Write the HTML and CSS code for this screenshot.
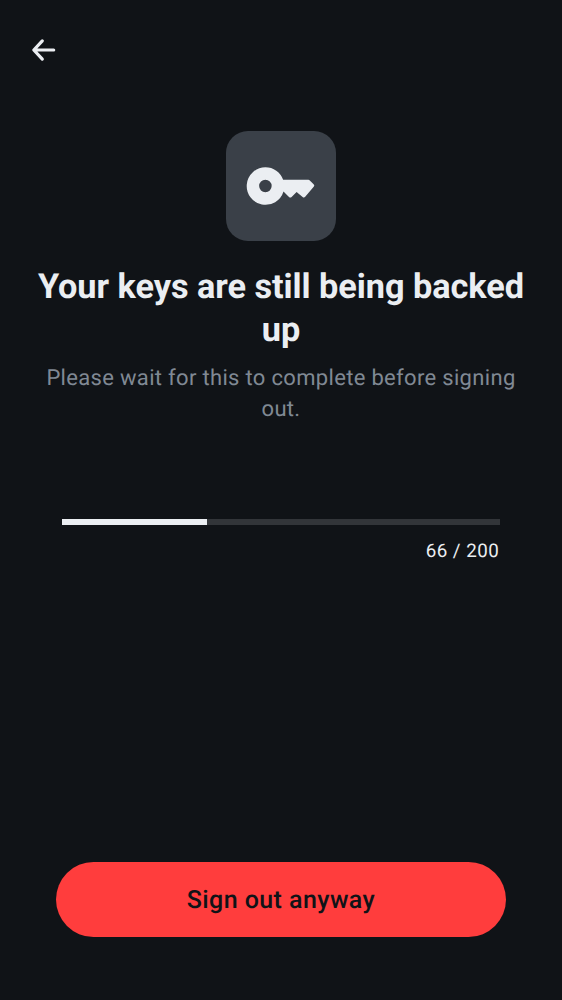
FILE: index.html
```html
<!DOCTYPE html>
<html lang="en">
<head>
<meta charset="utf-8">
<title>Sign out</title>
<link rel="stylesheet" href="styles.css">
</head>
<body>
<div class="screen">
  <header class="topbar">
    <button class="back" aria-label="Back">
      <svg viewBox="0 0 38 38" fill="none" stroke="currentColor" stroke-width="3.2" stroke-linecap="round" stroke-linejoin="round"><path d="M28.700 19H9.500M17.300 9.900L8.800 19l8.500 9.100"/></svg>
    </button>
  </header>
  <main class="content">
    <div class="tile">
      <svg viewBox="0.6 -0.6 75 75"><path fill="currentColor" fill-rule="evenodd" d="M22 18.600a18.800 18.800 0 0 1 17.750 12.600H65q.8 0 1.400.6l3.800 3.800q1.300 1.300.1 2.600L61.800 48.200q-1.200 1.300-2.600.1L53.200 43.400 48.200 48.300q-1.300 1.200-2.600 0L40.100 42.900A18.800 18.800 0 1 1 22 18.600zM22 31.150a6.250 6.250 0 1 0 0 12.500a6.250 6.250 0 1 0 0-12.500z"/></svg>
    </div>
    <h1 class="title">Your keys are still being backed up</h1>
    <p class="subtitle">Please wait for this to complete before signing out.</p>
    <div class="progress">
      <div class="track"><div class="fill"></div></div>
      <span class="count">66 / 200</span>
    </div>
  </main>
  <footer class="footer"><button class="danger">Sign out anyway</button></footer>
</div>
</body>
</html>
```
FILE: styles.css
```css
* { box-sizing: border-box; }
body { margin: 0; background: #101317; color: #ebeef2; font-family: Roboto, sans-serif; text-rendering: geometricPrecision; }
button { border: 0; font: inherit; text-rendering: inherit; }
.screen { height: 1000px; display: flex; flex-direction: column; }
.topbar { height: 131px; padding: 31px 0 0 25px; }
.back { display: block; padding: 0; background: none; color: #ebeef2; width: 38px; height: 38px; }
.back svg { display: block; width: 38px; height: 38px; }
.content { flex: 1; display: flex; flex-direction: column; align-items: center; padding: 0 31px; }
.tile { width: 109.5px; height: 109.5px; border-radius: 22px; background: #3a4048; display: flex; align-items: center; justify-content: center; }
.tile svg { width: 75px; height: 75px; }
.title { margin: 25.5px 0 0; font-size: 34.3px; line-height: 43px; letter-spacing: -.05px; font-weight: 700; text-align: center; }
.subtitle { margin: 11px 0 0; font-size: 22px; line-height: 31.3px; letter-spacing: .32px; color: #808994; text-align: center; }
.progress { width: 437.5px; margin-top: 93.4px; display: flex; flex-direction: column; align-items: flex-end; }
.track { width: 100%; height: 6px; background: #323539; }
.fill { width: 33%; height: 100%; background: #ebeef2; }
.count { margin: 14px .4px 0 0; font-size: 18.75px; line-height: 25px; letter-spacing: .5px; }
.footer { padding: 0 56px 62.7px; }
.danger { display: block; width: 450px; height: 75px; padding: 1px 0 0; border-radius: 38px; background: #ff3d3d; color: #101317; font-size: 25px; font-weight: 500; letter-spacing: .42px; }
```
